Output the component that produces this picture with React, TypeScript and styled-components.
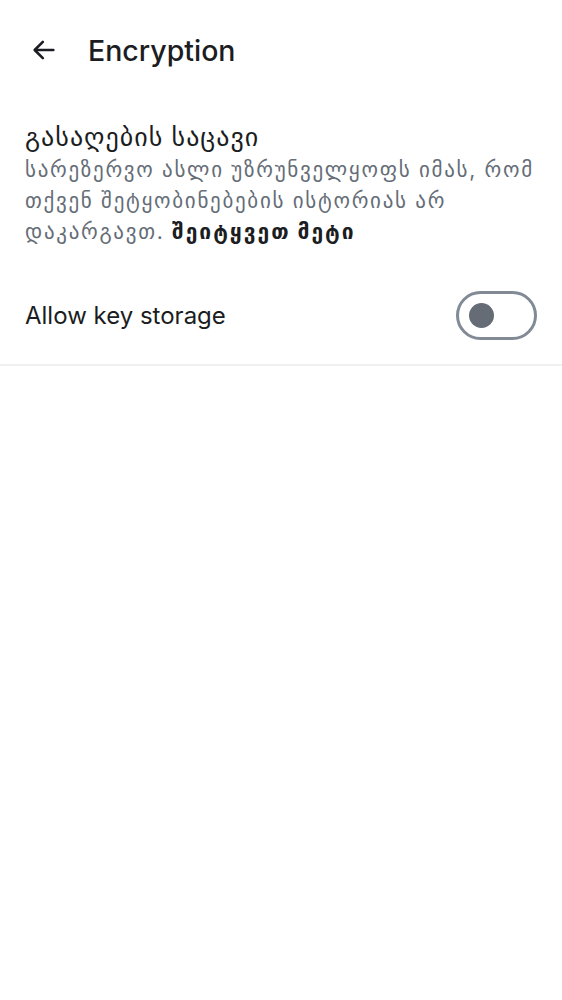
import React from "react";
import styled, { createGlobalStyle } from "styled-components";

const Global = createGlobalStyle`
  html, body { margin: 0; padding: 0; background: #ffffff; }
  body { font-family: Inter, "Noto Sans", "DejaVu Sans", sans-serif; color: #1b1d22; }
`;

const Page = styled.div`
  width: 562px;
  min-height: 1000px;
  background: #fff;
  display: flex;
  flex-direction: column;
`;

const Header = styled.header`
  height: 100px;
  display: flex;
  align-items: center;
  padding: 0 0 0 26px;
  gap: 26px;
  box-sizing: border-box;
`;

const BackButton = styled.button`
  width: 36px;
  height: 36px;
  border: 0;
  padding: 0;
  background: none;
  display: flex;
  align-items: center;
  justify-content: center;
  color: #1b1d22;
`;

const Title = styled.h1`
  margin: 0;
  font-size: 28.5px;
  font-weight: 500;
  letter-spacing: 0;
  color: #1b1d22;
`;

const Section = styled.section`
  padding: 20px 20px 0 25px;
  display: flex;
  flex-direction: column;
`;

const SectionTitle = styled.div`
  font-size: 26px;
  line-height: 34px;
  letter-spacing: 1px;
  color: #1b1d22;
`;

const Description = styled.p`
  margin: 0;
  font-size: 21px;
  line-height: 31px;
  letter-spacing: 1.7px;
  color: #656d77;
  b { color: #1b1d22; font-weight: 700; letter-spacing: 2px; }
`;

const Row = styled.div`
  display: flex;
  align-items: center;
  justify-content: space-between;
  padding: 0 25px;
  height: 100px;
  margin-top: 19px;
  border-bottom: 2px solid #f0f0f3;
  box-sizing: border-box;
`;

const RowLabel = styled.span`
  font-size: 24px;
  color: #1b1d22;
`;

const Switch = styled.div`
  width: 81px;
  height: 49px;
  border: 3px solid #818a95;
  border-radius: 25px;
  box-sizing: border-box;
  display: flex;
  align-items: center;
  padding-left: 10px;
`;

const Knob = styled.div`
  width: 25px;
  height: 25px;
  border-radius: 50%;
  background: #656c76;
`;

export default function App() {
  return (
    <Page>
      <Global />
      <Header>
        <BackButton aria-label="Back">
          <svg width="28" height="28" viewBox="0 0 24 24" fill="none" stroke="currentColor" strokeWidth="2.2" strokeLinecap="round" strokeLinejoin="round">
            <path d="M20 12H4.5" />
            <path d="M11 5l-7 7 7 7" />
          </svg>
        </BackButton>
        <Title>Encryption</Title>
      </Header>
      <Section>
        <SectionTitle>გასაღების საცავი</SectionTitle>
        <Description>
          სარეზერვო ასლი უზრუნველყოფს იმას, რომ თქვენ შეტყობინებების ისტორიას არ დაკარგავთ. <b>შეიტყვეთ მეტი</b>
        </Description>
      </Section>
      <Row>
        <RowLabel>Allow key storage</RowLabel>
        <Switch>
          <Knob />
        </Switch>
      </Row>
    </Page>
  );
}
